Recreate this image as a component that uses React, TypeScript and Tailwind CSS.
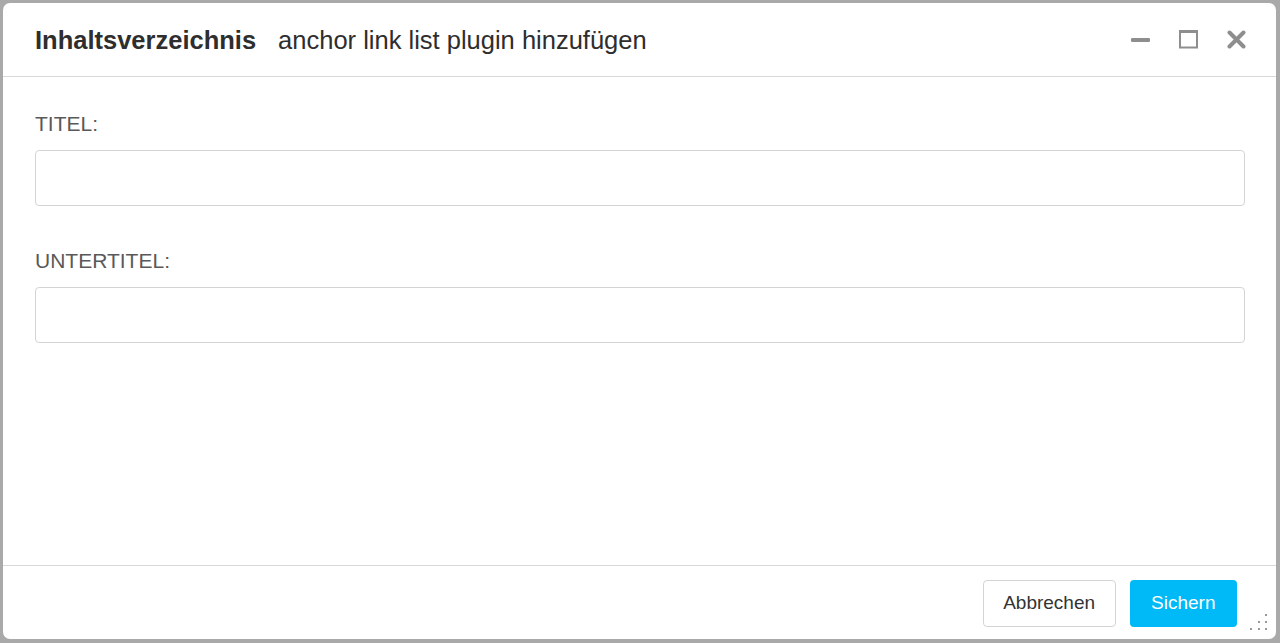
import { useState } from 'react';

function WindowButtons() {
  return (
    <div className="flex items-center gap-[29px] text-[#8e8e8e]">
      <button className="w-[19px] h-[19px] flex items-center justify-center">
        <svg width="19" height="19" viewBox="0 0 19 19">
          <rect x="0" y="8" width="19" height="4" rx="1" fill="currentColor" />
        </svg>
      </button>
      <button className="w-[19px] h-[19px] flex items-center justify-center">
        <svg width="19" height="19" viewBox="0 0 19 19">
          <rect x="1" y="1.5" width="17" height="16" fill="none" stroke="currentColor" strokeWidth="2" />
          <rect x="0" y="0" width="19" height="3" fill="currentColor" />
        </svg>
      </button>
      <button className="w-[19px] h-[19px] flex items-center justify-center">
        <svg width="19" height="19" viewBox="0 0 19 19">
          <path d="M2.5 2.5 L16.5 16.5 M16.5 2.5 L2.5 16.5" stroke="currentColor" strokeWidth="4" strokeLinecap="round" />
        </svg>
      </button>
    </div>
  );
}

function Field({ label }: { label: string }) {
  const [value, setValue] = useState('');
  return (
    <div className="flex flex-col">
      <label className="text-[21px] leading-[24px] text-[#595959] uppercase">{label}</label>
      <input
        value={value}
        onChange={(e) => setValue(e.target.value)}
        className="mt-[14px] h-[56px] w-full rounded-[4px] border border-[#d4d4d4] bg-white px-3 text-[18px] text-[#333] outline-none focus:border-[#00b9f7]"
      />
    </div>
  );
}

export default function App() {
  return (
    <div
      className="w-full h-[643px] bg-[#a9a9a9] pt-[3px] pl-[3px] pr-[4px] pb-[4px]"
      style={{ fontFamily: '"Liberation Sans", Arial, sans-serif' }}
    >
      <div className="relative h-full flex flex-col bg-white rounded-[7px] overflow-hidden">
        {/* header */}
        <div className="h-[74px] shrink-0 flex items-center justify-between pl-[32px] pr-[30px] border-b border-[#d9d9d9]">
          <div className="flex items-baseline gap-[22px] text-[25.5px] text-[#2e2e2e] pt-[2px]">
            <span className="font-bold">Inhaltsverzeichnis</span>
            <span>anchor link list plugin hinzufügen</span>
          </div>
          <WindowButtons />
        </div>

        {/* body */}
        <div className="flex-1 flex flex-col gap-[43px] pt-[35px] pl-[32px] pr-[31px]">
          <Field label="Titel:" />
          <Field label="Untertitel:" />
        </div>

        {/* footer */}
        <div className="h-[74px] shrink-0 flex items-start justify-end gap-[14px] pt-[14px] pr-[39px] border-t border-[#d9d9d9]">
          <button className="h-[47px] px-[19.5px] rounded-[4px] border border-[#d4d4d4] bg-white text-[19px] text-[#333]">
            Abbrechen
          </button>
          <button className="h-[47px] px-[21.5px] rounded-[4px] bg-[#00b9f7] text-[19px] text-white">
            Sichern
          </button>
        </div>

        {/* resize grip */}
        <svg className="absolute right-[8px] bottom-[8px]" width="18" height="18" viewBox="0 0 18 18">
          <g fill="#9a9a9a">
            <rect x="15" y="1" width="2" height="2" />
            <rect x="8" y="8" width="2" height="2" />
            <rect x="15" y="8" width="2" height="2" />
            <rect x="0" y="15" width="2" height="2" />
            <rect x="8" y="15" width="2" height="2" />
            <rect x="15" y="15" width="2" height="2" />
          </g>
        </svg>
      </div>
    </div>
  );
}
